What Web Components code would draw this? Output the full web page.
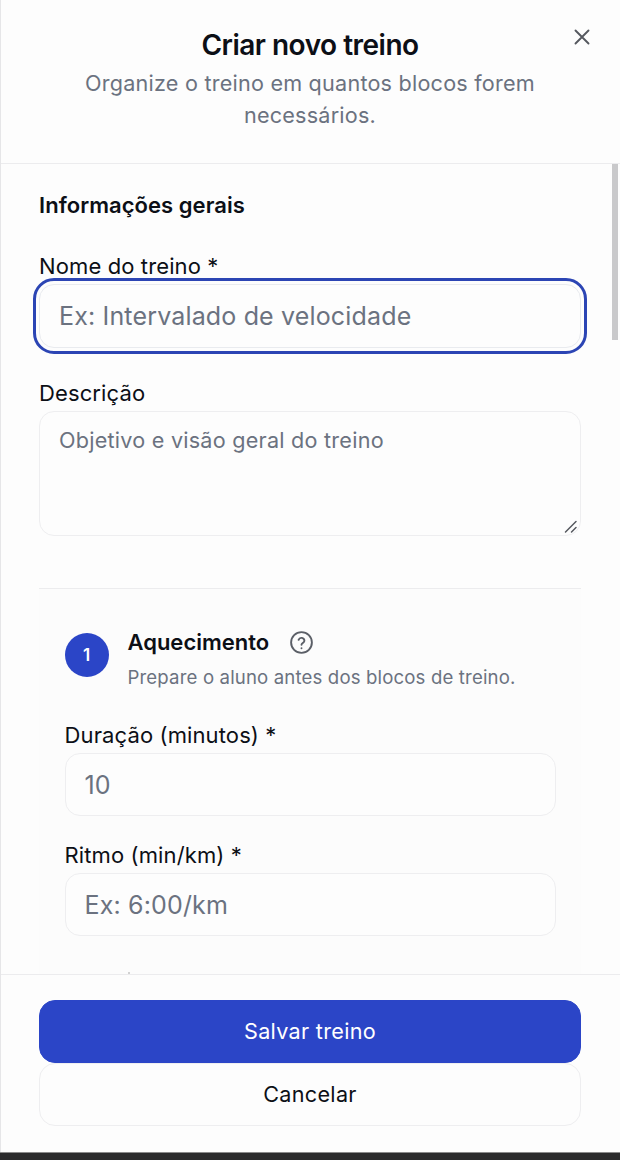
<!DOCTYPE html>
<html lang="pt"><head><meta charset="utf-8"><title>Criar novo treino</title>
<style>
html,body{margin:0;padding:0;background:#fdfdfd}
body{font-family:Inter,"Liberation Sans",sans-serif;color:#0c0f16}
</style></head><body>
<workout-dialog>
  <span slot="title">Criar novo treino</span>
  <span slot="subtitle">Organize o treino em quantos blocos forem necessários.</span>
  <section-title>Informações gerais</section-title>
  <form-field label="Nome do treino *" focused placeholder="Ex: Intervalado de velocidade"></form-field>
  <form-field label="Descrição" multiline placeholder="Objetivo e visão geral do treino"></form-field>
  <step-card number="1" heading="Aquecimento" hint="Prepare o aluno antes dos blocos de treino.">
    <form-field nested label="Duração (minutos) *" value="10"></form-field>
    <form-field nested label="Ritmo (min/km) *" placeholder="Ex: 6:00/km"></form-field>
  </step-card>
  <action-button slot="footer" primary>Salvar treino</action-button>
  <action-button slot="footer">Cancelar</action-button>
</workout-dialog>
<page-edge></page-edge>
<script>
function def(name, html){
  customElements.define(name, class extends HTMLElement{
    connectedCallback(){
      if(this.shadowRoot) return;
      const r=this.attachShadow({mode:'open'});
      r.innerHTML=typeof html==='function'?html(this):html;
    }
  });
}
def('workout-dialog',`<style>
:host{display:flex;flex-direction:column;height:1152px;box-sizing:border-box;border-left:1px solid #e6e6e8;background:#fdfdfd;overflow:hidden}
header{flex:none;height:164px;box-sizing:border-box;border-bottom:1px solid #ececee;padding:28px 40px 0 39px;position:relative;text-align:center}
h1{margin:0;font-size:28px;line-height:34px;font-weight:600;letter-spacing:-.5px;color:#0c0f16}
p{margin:6px 0 0;font-size:21.6px;line-height:31.5px;color:#6b7280;letter-spacing:.22px}
.close{position:absolute;right:30px;top:29px;width:16px;height:16px;display:block}
.scroll{flex:1;min-height:0;display:flex;overflow:hidden;position:relative}
.content{flex:1;min-width:0;box-sizing:border-box;padding:27px 31px 0 38px;height:100%;overflow:hidden}
.bar{flex:none;width:6px;height:176px;margin-right:2px;background:#c9c9cb}
footer{flex:none;height:178px;box-sizing:border-box;border-top:1px solid #ececee;padding:25px 39px 0 38px;display:flex;flex-direction:column;position:relative}
.dot{position:absolute;left:127px;top:-3px;width:2px;height:2px;background:#c4c4c4;border-radius:1px}
</style>
<header>
<h1><slot name="title"></slot></h1>
<p><slot name="subtitle"></slot></p>
<svg class="close" viewBox="0 0 16 16" fill="none" stroke="#55585f" stroke-width="1.9" stroke-linecap="round"><path d="M1.5 1.5l13 13M14.5 1.5l-13 13"/></svg>
</header>
<div class="scroll"><div class="content"><slot></slot></div><div class="bar"></div></div>
<footer><span class="dot"></span><slot name="footer"></slot></footer>`);
def('section-title',`<style>
:host{display:block;font-size:22px;line-height:28px;font-weight:590;letter-spacing:.05px;color:#0c0f16;margin-bottom:34px}
</style><slot></slot>`);
def('form-field',el=>{
  const a=n=>el.getAttribute(n), h=el.hasAttribute.bind(el);
  const text=a('value')||a('placeholder')||'';
  return `<style>
:host{display:block;margin-bottom:${h('nested')?'26':(h('multiline')?'52':'32')}px}
label{display:block;font-size:22px;line-height:28px;font-weight:440;letter-spacing:.12px;color:#0c0f16;margin:-1px 0 4px}
.box{box-sizing:border-box;height:${h('multiline')?125:(h('nested')?63:64)}px;border:1.5px solid #eeeef0;border-radius:15px;background:#fdfdfd;padding:${h('multiline')?'12px 19px':'0 19px'};display:flex;align-items:${h('multiline')?'flex-start':'center'};position:relative;font-size:${h('multiline')?'21.6px':'25px'};line-height:32px;letter-spacing:${h('multiline')?'.24px':'.16px'};color:#6b7280}
:host([focused]) .box{outline:3px solid #2c45b4;outline-offset:3px;border-color:#e9ebef}
svg{position:absolute;right:2px;bottom:1px;width:14px;height:14px}
</style><label>${a('label')}</label><div class="box"><span>${text}</span>${h('multiline')?'<svg viewBox="0 0 14 14" fill="none" stroke="#55585f" stroke-width="1.5" stroke-linecap="round"><path d="M1.5 12L12 1.5M7.5 12L12 7.5"/></svg>':''}</div>`;
});
def('step-card',el=>`<style>
:host{display:block;border-top:1px solid #ececee;background:#fcfcfc;padding:29px 25.5px 80px 25.5px}
.head{display:flex;gap:19px;margin-bottom:32px}
.num{flex:none;width:44px;height:44px;margin-top:15px;border-radius:50%;background:#2b45c7;color:#fff;font-size:17px;font-weight:600;display:flex;align-items:center;justify-content:center}
.t{display:flex;align-items:center;gap:19.5px;font-size:22px;line-height:28px;font-weight:590;letter-spacing:0;color:#0c0f16;margin-top:10px}
.s{margin-top:8px;font-size:18.6px;line-height:26px;letter-spacing:.15px;color:#6b7280}
svg{width:25px;height:25px;display:block}
</style>
<div class="head"><div class="num">${el.getAttribute('number')}</div><div>
<div class="t"><span>${el.getAttribute('heading')}</span>
<svg viewBox="0 0 25 25" fill="none" stroke="#5b5f67" stroke-width="1.9" stroke-linecap="round" stroke-linejoin="round"><circle cx="12.5" cy="12.5" r="10.4"/><path d="M9.6 9.8a3 3 0 0 1 5.8 1c0 2-2.9 2.5-2.9 4"/><path d="M12.5 18.2h.01"/></svg></div>
<div class="s">${el.getAttribute('hint')}</div></div></div><slot></slot>`);
def('action-button',`<style>
:host{display:flex;align-items:center;justify-content:center;box-sizing:border-box;height:63px;padding-bottom:2px;border-radius:16px;border:1.5px solid #eeeef0;background:#fdfdfd;color:#0c0f16;font-size:21.6px;font-weight:440;letter-spacing:.3px}
:host([primary]){background:#2b45c7;border-color:#2b45c7;color:#fff}
</style><slot></slot>`);
def('page-edge','<style>:host{display:block;box-sizing:border-box;height:8px;background:#2b2b2c;border-top:1px solid #8a8a8a}</style>');
</script>
</body></html>
